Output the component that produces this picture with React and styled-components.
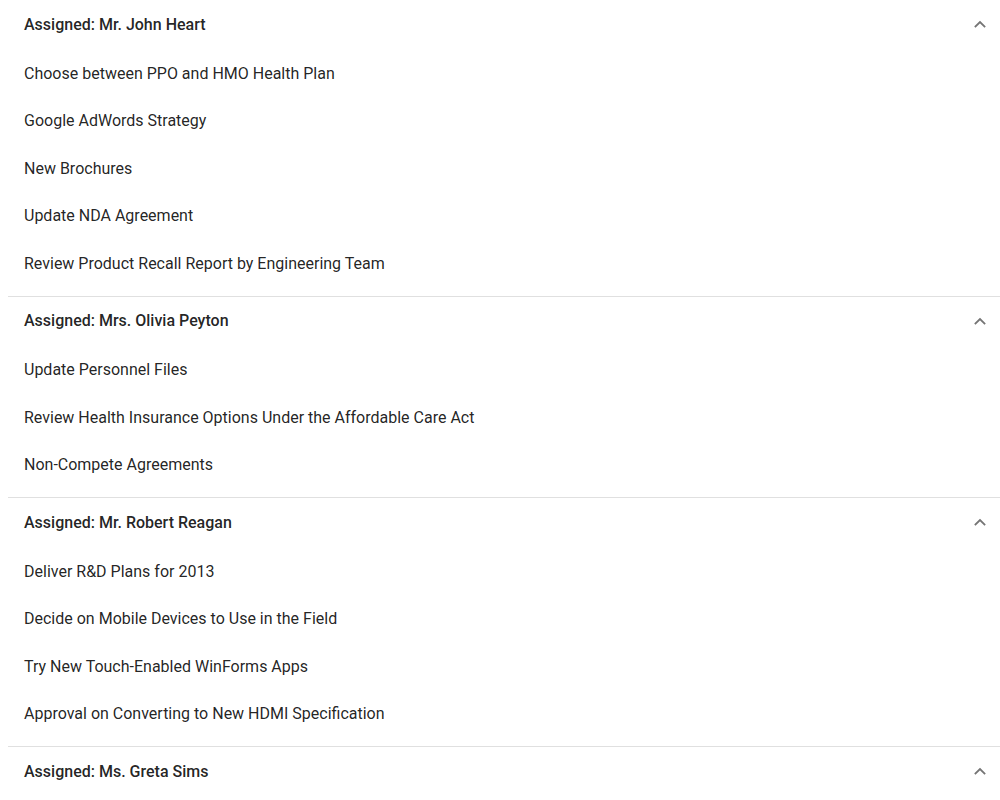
import React from "react";
import styled, { createGlobalStyle } from "styled-components";

const Global = createGlobalStyle`
  html, body { margin: 0; padding: 0; background: #fff; }
  body { font-family: Roboto, "Liberation Sans", sans-serif; color: rgba(0,0,0,0.87); }
`;

const List = styled.div`
  padding: 0 0 0 8px;
  width: 992px;
`;

const Group = styled.section`
  padding-bottom: 8.5px;
  border-bottom: 1px solid #e0e0e0;
`;

const Header = styled.div`
  display: flex;
  align-items: center;
  justify-content: space-between;
  height: 49.5px;
  padding: 0 12px 1.5px 16px;
  box-sizing: border-box;
  font-size: 16px;
  font-weight: 500;
  color: rgba(0,0,0,0.87);
`;

const Chevron = styled.svg`
  width: 16px;
  height: 16px;
  color: #757575;
`;

const Item = styled.div`
  height: 47.5px;
  display: flex;
  align-items: center;
  padding: 0 16px;
  font-size: 16px;
  font-weight: 400;
  color: rgba(0,0,0,0.87);
`;

const groups = [
  {
    key: "Mr. John Heart",
    items: [
      "Choose between PPO and HMO Health Plan",
      "Google AdWords Strategy",
      "New Brochures",
      "Update NDA Agreement",
      "Review Product Recall Report by Engineering Team",
    ],
  },
  {
    key: "Mrs. Olivia Peyton",
    items: [
      "Update Personnel Files",
      "Review Health Insurance Options Under the Affordable Care Act",
      "Non-Compete Agreements",
    ],
  },
  {
    key: "Mr. Robert Reagan",
    items: [
      "Deliver R&D Plans for 2013",
      "Decide on Mobile Devices to Use in the Field",
      "Try New Touch-Enabled WinForms Apps",
      "Approval on Converting to New HDMI Specification",
    ],
  },
  {
    key: "Ms. Greta Sims",
    items: [],
  },
];

function ChevronUp() {
  return (
    <Chevron viewBox="0 0 16 16" fill="none">
      <path d="M3.5 10.5 L8 6 L12.5 10.5" stroke="currentColor" strokeWidth="1.8" strokeLinecap="square" />
    </Chevron>
  );
}

export default function App() {
  return (
    <>
      <Global />
      <List>
        {groups.map((g) => (
          <Group key={g.key}>
            <Header>
              <span>Assigned: {g.key}</span>
              <ChevronUp />
            </Header>
            {g.items.map((it) => (
              <Item key={it}>{it}</Item>
            ))}
          </Group>
        ))}
      </List>
    </>
  );
}
